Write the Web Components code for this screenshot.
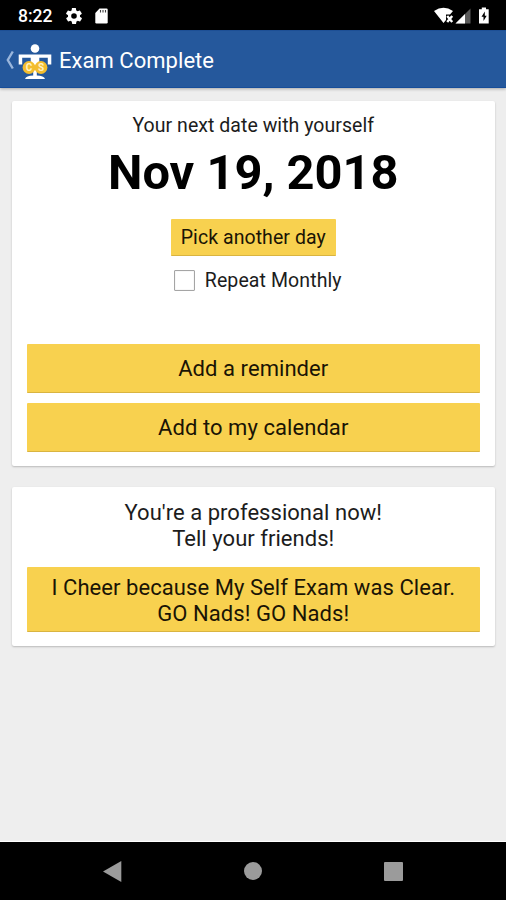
<!DOCTYPE html>
<html lang="en">
<head>
<meta charset="utf-8">
<title>Exam Complete</title>
<style>
  html, body { height: 100%; margin: 0; }
  body { font-family: Roboto, "Liberation Sans", sans-serif; overflow: hidden; }
</style>
</head>
<body>
<exam-complete></exam-complete>

<script>
// Shared base: every element stamps its own styles and markup into an open root.
class BaseElement extends HTMLElement {
  constructor () {
    super()
    this.attachShadow({ mode: 'open' })
    const template = document.createElement('template')
    template.innerHTML = `<style>${this.constructor.styles()}</style>${this.constructor.html()}`
    this.shadowRoot.appendChild(template.content.cloneNode(true))
  }
}

class StatusBar extends BaseElement {
  static styles () {
    return /* css */`
      :host {
        display: flex;
        align-items: center;
        flex: none;
        box-sizing: border-box;
        height: 30px;
        padding: 1px 16px 0 18px;
        background: #000;
        color: #fff;
      }
      .time { font-size: 17.5px; font-weight: 500; line-height: 30px; width: 35px; margin-right: 13px; }
      svg { display: block; flex: none; }
      .card { margin-left: 13px; }
      .spacer { flex: 1; }
      .signal { margin-left: 1px; }
      .battery { margin-left: 7px; }
    `
  }

  static html () {
    return /* html */`
      <span class="time">8:22</span>
      <svg width="16" height="16" viewBox="2 2 20 20" fill="#fff">
        <path d="M19.4 13c.1-.3.1-.7.1-1s0-.7-.1-1l2.1-1.6c.2-.2.3-.4.1-.7l-2-3.4c-.1-.2-.4-.3-.6-.2l-2.5 1c-.5-.4-1.1-.7-1.7-1l-.4-2.6c0-.3-.2-.5-.5-.5h-4c-.2 0-.4.2-.5.4l-.4 2.7c-.6.2-1.2.6-1.7 1l-2.5-1c-.2-.1-.5 0-.6.2l-2 3.4c-.1.3 0 .5.1.7L4.6 11c-.1.3-.1.7-.1 1s0 .7.1 1l-2.1 1.6c-.2.2-.3.4-.1.7l2 3.4c.1.2.4.3.6.2l2.5-1c.5.4 1.1.7 1.7 1l.4 2.6c0 .3.2.5.5.5h4c.2 0 .4-.2.5-.4l.4-2.7c.6-.2 1.2-.6 1.7-1l2.5 1c.2.1.5 0 .6-.2l2-3.4c.1-.3 0-.5-.1-.7zM12 15.5a3.5 3.5 0 1 1 0-7 3.5 3.5 0 0 1 0 7z"/>
      </svg>
      <svg class="card" width="13" height="16" viewBox="0 0 13 16">
        <path d="M4.500.5H11.500Q12.700.5 12.700 1.700V14.300Q12.700 15.500 11.500 15.500H1.500Q.3 15.500.3 14.300V5z" fill="#fff"/>
        <path d="M5.500 2v2.500M8 2v2.500M10.500 2v2.500" stroke="#000" stroke-width="1.1" opacity=".75"/>
      </svg>
      <span class="spacer"></span>
      <svg width="20" height="17" viewBox="0 0 20 17">
        <path d="M0 4Q9.500-2.500 19 4L16 7.500H12V13L9.500 16z" fill="#fff"/>
        <path d="M13.200 9l5 6M18.200 9l-5 6" stroke="#fff" stroke-width="2.4"/>
      </svg>
      <svg class="signal" width="16" height="16" viewBox="0 0 16 16">
        <path d="M.5 15.500L15.500.5V15.500z" fill="#5a5a5a"/>
        <path d="M.5 15.500L10 6V15.500z" fill="#fff"/>
      </svg>
      <svg class="battery" width="12" height="17" viewBox="0 0 12 17">
        <path d="M3.800.5H8V2.300H10.700V16.500H1V2.300H3.800z" fill="#fff"/>
        <path d="M6.800 4.500L3.500 9.700H5.500V14L8.700 8.700H6.800z" fill="#000"/>
      </svg>
    `
  }
}

class AppLogo extends BaseElement {
  static styles () {
    return /* css */`
      :host { display: block; flex: none; }
      svg { display: block; }
      text { font: 700 10px Roboto, "Liberation Sans", sans-serif; fill: #fff2c4; }
    `
  }

  // A figure holding two coins like a pair of scales.
  static html () {
    return /* html */`
      <svg width="34" height="36" viewBox="0 0 34 36">
        <circle cx="17" cy="4.500" r="4.300" fill="#fff"/>
        <path d="M.7 10.500H33.300V20.500H29.800V13.800H21.300V26H12.700V13.800H4.200V20.500H.7z" fill="#fff"/>
        <path d="M7 35Q8 32 15.200 31.600V26H18.800V31.600Q26 32 27 35z" fill="#fff"/>
        <circle cx="11" cy="23.500" r="6.400" fill="#f3bd2e"/>
        <circle cx="23" cy="23.500" r="6.400" fill="#f3bd2e"/>
        <text x="11" y="27.100" text-anchor="middle">C</text>
        <text x="23" y="27.100" text-anchor="middle">S</text>
      </svg>
    `
  }
}

class AppBar extends BaseElement {
  static styles () {
    return /* css */`
      :host {
        display: flex;
        align-items: center;
        flex: none;
        box-sizing: border-box;
        height: 58px;
        padding: 0 6px;
        background: #25589c;
        border-top: 1px solid #1d4f95;
        border-bottom: 1px solid #164d9a;
        box-shadow: 0 1px 3px rgba(0, 0, 0, .3);
        color: #fff;
        z-index: 1;
      }
      svg { display: block; flex: none; margin: 2px 4px 0 0; }
      app-logo { margin: 5px 7px 0 0; }
      .title { font-size: 22px; letter-spacing: .04px; white-space: nowrap; padding-top: 2px; }
    `
  }

  static html () {
    return /* html */`
      <svg width="8" height="20" viewBox="0 0 8 20">
        <path d="M6.800 1.500L1.800 10L6.800 18.500" fill="none" stroke="#9ab6dc" stroke-width="2.4"/>
      </svg>
      <app-logo></app-logo>
      <span class="title"><slot></slot></span>
    `
  }
}

class InfoCard extends BaseElement {
  static styles () {
    return /* css */`
      :host {
        display: flex;
        flex-direction: column;
        align-items: center;
        flex: none;
        box-sizing: border-box;
        padding: 0 15px;
        background: #fff;
        border-radius: 2px;
        box-shadow: 0 1px 2px rgba(0, 0, 0, .22);
      }
    `
  }

  static html () {
    return '<slot></slot>'
  }
}

class FlatButton extends BaseElement {
  static styles () {
    return /* css */`
      :host {
        display: flex;
        align-items: center;
        justify-content: center;
        align-self: stretch;
        flex: none;
        box-sizing: border-box;
        height: 49px;
        padding-top: 2px;
        background: #f8d14f;
        border-bottom: 1px solid #d9b440;
        border-radius: 1px;
        color: #1a1405;
        font-size: 22px;
        line-height: 26px;
        letter-spacing: .06px;
        text-align: center;
        white-space: nowrap;
      }
      :host([small]) {
        align-self: center;
        width: 165px;
        height: 37px;
        font-size: 19.5px;
      }
      :host([tall]) { height: 65px; padding-top: 3px; }
    `
  }

  static html () {
    return '<span><slot></slot></span>'
  }
}

class CheckBox extends BaseElement {
  static styles () {
    return /* css */`
      :host {
        display: flex;
        align-items: center;
        gap: 10px;
        font-size: 19.5px;
        line-height: 24px;
        letter-spacing: .1px;
        white-space: nowrap;
      }
      .box {
        box-sizing: border-box;
        width: 21px;
        height: 21px;
        margin-top: -2px;
        border: 1px solid #a5a5a5;
        box-shadow: inset 0 0 1px #bbb;
        border-radius: 1px;
      }
    `
  }

  static html () {
    return '<span class="box"></span><span><slot></slot></span>'
  }
}

class NavBar extends BaseElement {
  static styles () {
    return /* css */`
      :host {
        display: flex;
        align-items: center;
        justify-content: space-between;
        flex: none;
        box-sizing: border-box;
        height: 58px;
        padding: 0 103px;
        background: #000;
      }
      svg { display: block; }
    `
  }

  static html () {
    return /* html */`
      <svg width="19" height="21" viewBox="0 0 19 21"><path d="M0 10.500L18.300 0V21z" fill="#9b9b9b"/></svg>
      <svg width="18" height="18" viewBox="0 0 18 18"><circle cx="9" cy="9" r="9" fill="#9b9b9b"/></svg>
      <svg width="19" height="19" viewBox="0 0 19 19"><rect width="19" height="19" rx="1" fill="#9b9b9b"/></svg>
    `
  }
}

class ExamComplete extends BaseElement {
  static styles () {
    return /* css */`
      :host {
        display: flex;
        flex-direction: column;
        height: 900px;
        background: #eee;
        color: #1c1c1c;
      }
      main {
        display: flex;
        flex-direction: column;
        flex: 1;
        gap: 21px;
        padding: 13px 11.5px 0 12px;
        border-bottom: 1px solid #fff;
      }
      .date-card { height: 365px; }
      .share-card { height: 159px; }
      .lead { margin-top: 12px; font-size: 19.5px; line-height: 26px; letter-spacing: .04px; }
      .date {
        margin-top: 5px;
        color: #000;
        font-size: 48.8px;
        font-weight: 700;
        line-height: 58px;
        white-space: nowrap;
      }
      .pick { margin-top: 17px; }
      .repeat { margin-top: 13px; margin-left: 9px; }
      .reminder { margin-top: auto; }
      .calendar { margin: 10px 0 14px; }
      .share-text {
        margin-top: 13px;
        font-size: 22px;
        line-height: 26px;
        letter-spacing: .04px;
        text-align: center;
      }
      .share { margin-top: 15px; }
    `
  }

  static html () {
    return /* html */`
      <status-bar></status-bar>
      <app-bar>Exam Complete</app-bar>
      <main>
        <info-card class="date-card">
          <div class="lead">Your next date with yourself</div>
          <div class="date">Nov 19, 2018</div>
          <flat-button class="pick" small>Pick another day</flat-button>
          <check-box class="repeat">Repeat Monthly</check-box>
          <flat-button class="reminder">Add a reminder</flat-button>
          <flat-button class="calendar">Add to my calendar</flat-button>
        </info-card>
        <info-card class="share-card">
          <div class="share-text">You're a professional now!<br>Tell your friends!</div>
          <flat-button class="share" tall>I Cheer because My Self Exam was Clear.<br>GO Nads! GO Nads!</flat-button>
        </info-card>
      </main>
      <nav-bar></nav-bar>
    `
  }
}

customElements.define('status-bar', StatusBar)
customElements.define('app-logo', AppLogo)
customElements.define('app-bar', AppBar)
customElements.define('info-card', InfoCard)
customElements.define('flat-button', FlatButton)
customElements.define('check-box', CheckBox)
customElements.define('nav-bar', NavBar)
customElements.define('exam-complete', ExamComplete)
</script>
</body>
</html>
